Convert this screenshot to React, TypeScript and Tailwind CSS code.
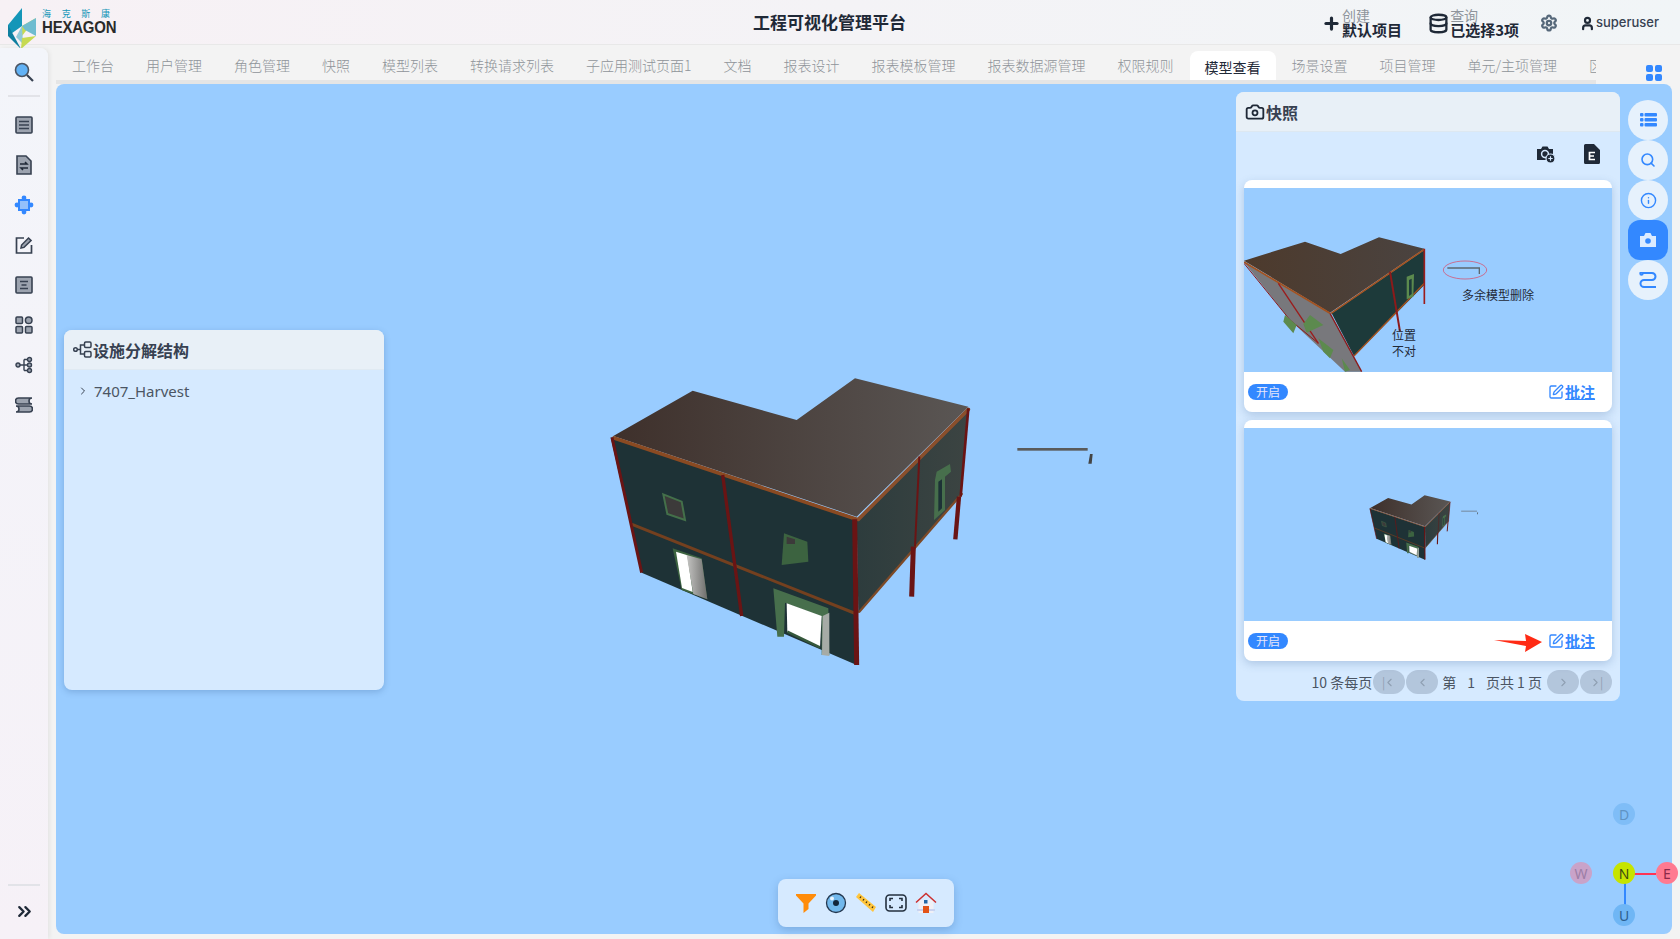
import { ChevronRight, ChevronLeft, ChevronsRight, Info, Search, Settings, SquarePen, Camera, User, Plus, Database } from "lucide-react";

const tabs = ["工作台", "用户管理", "角色管理", "快照", "模型列表", "转换请求列表", "子应用测试页面1", "文档", "报表设计", "报表模板管理", "报表数据源管理", "权限规则", "模型查看", "场景设置", "项目管理", "单元/主项管理", "区域管理"];

const cjk = { fontFamily: '"Noto Sans CJK SC", "Noto Sans", sans-serif' };

function Logo() {
  return (
    <div className="flex items-start pl-2 pt-2">
      <svg width="29" height="42" viewBox="0 0 29 42">
        <polygon points="0,17 14,0 14,18 0,28" fill="#1496b8" />
        <polygon points="0,17 13,41 0,28" fill="#0f7f9f" />
        <polygon points="14,18 28,10 14,28" fill="#c6da52" />
        <polygon points="14,18 28,10 28,28 17,22" fill="#6fbcd0" />
        <polygon points="8,29 14,18 15,36" fill="#8fc9d8" />
        <polygon points="13,41 14,30 28,28" fill="#c6da52" />
      </svg>
      <div className="ml-[5px] flex flex-col">
        <div className="flex w-[68px] justify-between text-[9px] leading-[12px] text-[#1496b8]" style={cjk}>
          <span>海</span><span>克</span><span>斯</span><span>康</span>
        </div>
        <div className="font-['Liberation_Sans'] text-[17px] leading-[16px] font-bold tracking-[-0.2px] text-[#2a2a2a] [transform:scaleX(0.88)] origin-left w-[78px]">HEXAGON</div>
      </div>
    </div>
  );
}

function Building({ className }: { className?: string }) {
  return (
    <svg viewBox="0 0 1560 960" className={className}>
      <defs>
        <linearGradient id="roofG" x1="0" x2="1"><stop offset="0" stopColor="#3e302b" /><stop offset="1" stopColor="#5a5654" /></linearGradient>
        <linearGradient id="wallR" x1="0" x2="1"><stop offset="0" stopColor="#2d3c3d" /><stop offset="1" stopColor="#3c4442" /></linearGradient>
        <linearGradient id="doorG" x1="0" x2="1"><stop offset="0" stopColor="#c4c4c2" /><stop offset="1" stopColor="#6e6e6c" /></linearGradient>
      </defs>
      <polygon points="62,232 800,480 800,915 155,638" fill="#1e3236" />
      <polygon points="800,480 1135,145 1115,400 805,760" fill="url(#wallR)" />
      <polygon points="70,228 308,92 620,180 795,55 1135,140 800,470" fill="url(#roofG)" />
      <g fill="none" strokeLinecap="round">
        <path d="M72,234 L800,478" stroke="#8a4a22" strokeWidth="11" />
        <path d="M805,478 L1135,148" stroke="#8a4f2c" strokeWidth="11" />
        <path d="M128,494 L800,762" stroke="#74401f" strokeWidth="9" />
        <path d="M808,755 L1115,402" stroke="#7d4a28" strokeWidth="7" />
      </g>
      <g fill="none" stroke="#6a1414">
        <path d="M66,232 L155,638" strokeWidth="9" />
        <path d="M398,345 L455,768" strokeWidth="10" />
        <path d="M794,478 L800,915" strokeWidth="15" />
        <path d="M988,290 L975,560" strokeWidth="6" />
        <path d="M970,560 L965,710" strokeWidth="15" />
        <path d="M1135,145 L1112,410" strokeWidth="8" />
        <path d="M1107,410 L1096,538" strokeWidth="13" />
      </g>
      <polygon points="220,403 275,425 285,480 232,462" fill="#3c3a3a" stroke="#44704a" strokeWidth="6" />
      <polygon points="582,520 652,545 655,605 575,615" fill="#3c6340" />
      <polygon points="590,530 615,538 615,552 590,552" fill="#3c3a3a" />
      <polygon points="248,565 335,595 352,718 275,690" fill="#3c6340" />
      <polygon points="258,575 292,586 308,696 276,684" fill="#ffffff" />
      <polygon points="290,585 335,598 352,718 310,702" fill="url(#doorG)" />
      <polygon points="550,685 715,745 718,885 695,885 695,770 585,728 582,830 562,830" fill="#476f4c" />
      <polygon points="590,730 695,768 690,862 592,815" fill="#ffffff" />
      <path d="M592,815 L690,862" stroke="#35583b" strokeWidth="7" />
      <polygon points="698,768 718,758 718,888 696,885" fill="#a6aba6" />
      <polygon points="1040,335 1080,312 1083,335 1065,350 1065,450 1032,480 1035,360" fill="#476f4c" />
      <polygon points="1045,365 1056,358 1056,445 1045,455" fill="#1d3236" />
      <rect x="1282" y="264" width="211" height="8" fill="#5a5a5a" />
      <polygon points="1500,282 1508,282 1505,311 1495,311" fill="#444" />
    </svg>
  );
}

function Shot1() {
  return (
    <svg viewBox="42 54 1104 552" className="absolute inset-0 h-full w-full">
      <defs>
        <linearGradient id="r1" x1="0" x2="1"><stop offset="0" stopColor="#4d3a2c" /><stop offset="1" stopColor="#4a4340" /></linearGradient>
      </defs>
      <polygon points="42,276 300,430 395,605 345,605 180,450" fill="#78787c" />
      <polygon points="305,430 583,240 583,345 372,558" fill="#1d3a3a" />
      <polygon points="42,272 225,215 332,252 447,202 583,236 300,428" fill="url(#r1)" />
      <g fill="none">
        <path d="M42,276 L300,430" stroke="#a4521f" strokeWidth="5" />
        <path d="M303,430 L583,238" stroke="#a4521f" strokeWidth="5" />
        <path d="M372,558 L583,340" stroke="#a4521f" strokeWidth="4" />
        <path d="M42,280 L180,450 L265,520" stroke="#8d1a1a" strokeWidth="3" />
        <path d="M145,340 L265,520" stroke="#9b1c1c" strokeWidth="4" />
        <path d="M300,430 L395,605" stroke="#8d1a1a" strokeWidth="4" />
        <path d="M480,305 L510,485" stroke="#8d1a1a" strokeWidth="6" />
        <path d="M583,236 L583,402" stroke="#9b1c1c" strokeWidth="5" />
      </g>
      <polygon points="165,435 200,465 190,490 160,455" fill="#5c8a4e" />
      <polygon points="240,435 280,465 230,488 220,462" fill="#5c8a4e" />
      <polygon points="265,505 310,540 300,565 280,545" fill="#5c8a4e" />
      <polygon points="335,565 360,600 345,605" fill="#5c8a4e" />
      <polygon points="530,320 552,312 550,380 530,388" fill="#5c8a4e" />
      <polygon points="537,330 545,326 545,372 537,378" fill="#1d3a3a" />
      <ellipse cx="705" cy="300" rx="65" ry="27" fill="none" stroke="#e0405a" strokeWidth="2" />
      <path d="M652,294 L748,294 L748,312" fill="none" stroke="#5c6770" strokeWidth="4" />
    </svg>
  );
}

function ShotCard({ h, children }: { h: string; children: React.ReactNode }) {
  return (
    <div className="relative flex flex-col overflow-hidden rounded-lg bg-white pt-2 shadow-[0_3px_8px_rgba(60,100,150,0.25)]">
      <div className={`relative bg-[#99ccff] ${h}`}>{children}</div>
      <div className="flex h-10 items-center justify-between pr-[17px] pl-1">
        <span className="flex h-4 w-10 items-center justify-center rounded-full bg-[#3388ff] text-[12px] text-[#e6e6fa]" style={cjk}>开启</span>
        <a className="flex items-center gap-px text-[15px] font-bold text-[#3388ff] underline" style={cjk}>
          <SquarePen size={16} strokeWidth={2} />批注
        </a>
      </div>
    </div>
  );
}

function PagerBtn({ children }: { children: React.ReactNode }) {
  return <span className="flex h-6 w-8 items-center justify-center rounded-full bg-[#b3c6dc] text-[#8f9fb2]">{children}</span>;
}

const sideIcons = [
  <svg width="18" height="18" viewBox="0 0 18 18" key="a"><rect x="1" y="1" width="16" height="16" rx="1" fill="#9ca3af" stroke="#374151" strokeWidth="1.6" /><path d="M4 5.5h10M4 9h10M4 12.5h10" stroke="#374151" strokeWidth="1.6" /></svg>,
  <svg width="16" height="20" viewBox="0 0 16 20" key="b"><path d="M1 1h9l5 5v13H1z" fill="#9ca3af" stroke="#374151" strokeWidth="1.6" /><path d="M4 9h7l-2-2M12 13H5l2 2" fill="none" stroke="#1f2937" strokeWidth="1.5" /></svg>,
  <svg width="20" height="20" viewBox="0 0 20 20" key="c"><rect x="5" y="5" width="10" height="10" fill="#93c0fb" stroke="#3388ff" strokeWidth="2" /><circle cx="10" cy="3" r="2.4" fill="#3388ff" /><circle cx="10" cy="17" r="2.4" fill="#3388ff" /><circle cx="3" cy="10" r="2.4" fill="#3388ff" /><circle cx="17" cy="10" r="2.4" fill="#3388ff" /></svg>,
  <svg width="18" height="18" viewBox="0 0 18 18" key="d"><path d="M9 2H1.5v15h15V9" fill="none" stroke="#374151" strokeWidth="1.7" /><path d="M6 12l.6-3L13.5 2l2.6 2.6L9 11.4z" fill="#9ca3af" stroke="#374151" strokeWidth="1.5" /></svg>,
  <svg width="18" height="18" viewBox="0 0 18 18" key="e"><rect x="1" y="1" width="16" height="16" rx="1" fill="#9ca3af" stroke="#374151" strokeWidth="1.6" /><path d="M5 5.5h8M6.5 9h5M5 12.5h8" stroke="#374151" strokeWidth="1.6" /></svg>,
  <svg width="18" height="18" viewBox="0 0 18 18" key="f"><rect x="1" y="1" width="6.5" height="6.5" rx="1" fill="#9ca3af" stroke="#374151" strokeWidth="1.5" /><circle cx="13.7" cy="4.2" r="3.3" fill="#9ca3af" stroke="#374151" strokeWidth="1.5" /><rect x="1" y="10.5" width="6.5" height="6.5" rx="1" fill="#9ca3af" stroke="#374151" strokeWidth="1.5" /><rect x="10.5" y="10.5" width="6.5" height="6.5" rx="1" fill="#9ca3af" stroke="#374151" strokeWidth="1.5" /></svg>,
  <svg width="18" height="18" viewBox="0 0 18 18" key="g"><circle cx="3" cy="9" r="2" fill="#9ca3af" stroke="#374151" strokeWidth="1.4" /><path d="M5 9h4M9 3.5v11M9 3.5h4M9 9h4M9 14.5h4" fill="none" stroke="#374151" strokeWidth="1.4" /><circle cx="14.5" cy="3.5" r="2" fill="#9ca3af" stroke="#374151" strokeWidth="1.4" /><circle cx="14.5" cy="9" r="2" fill="#9ca3af" stroke="#374151" strokeWidth="1.4" /><circle cx="14.5" cy="14.5" r="2" fill="#9ca3af" stroke="#374151" strokeWidth="1.4" /></svg>,
  <svg width="18" height="18" viewBox="0 0 18 18" key="h"><path d="M17 2H3.5a2.5 2.5 0 0 0 0 6H17a3 3 0 0 1 0-6z" fill="#9ca3af" stroke="#374151" strokeWidth="1.6" /><path d="M1 10h13.5a2.5 2.5 0 0 1 0 6H1a3 3 0 0 0 0-6z" fill="#9ca3af" stroke="#374151" strokeWidth="1.6" /></svg>,
];

export default function App() {
  return (
    <div className="flex h-screen w-full flex-col overflow-hidden bg-[#f3f3f3] font-['Noto_Sans_CJK_SC',sans-serif]" style={cjk}>
      <header className="flex h-[45px] shrink-0 items-start border-b border-[#e8e8e8] bg-gradient-to-r from-[#f7f1f5] to-[#f1f5f7]">
        <div className="flex-1"><Logo /></div>
        <h1 className="pt-[10px] text-[17px] leading-6 font-bold text-[#1f2937]">工程可视化管理平台</h1>
        <div className="flex flex-1 items-center justify-end pt-[8px] pr-[21px]">
          <Plus size={19} strokeWidth={4} className="text-[#1f2937]" />
          <div className="mr-[26px] ml-px flex flex-col text-[14px] leading-[14px]">
            <span className="text-[#8f959c]">创建</span>
            <span className="text-[15px] leading-[16px] font-bold text-[#1f2937]">默认项目</span>
          </div>
          <Database size={21} strokeWidth={2.6} className="mr-px text-[#1f2937]" />
          <div className="mr-[21px] flex flex-col text-[14px] leading-[14px]">
            <span className="text-[#8f959c]">查询</span>
            <span className="text-[15px] leading-[16px] font-bold text-[#1f2937]">已选择3项</span>
          </div>
          <Settings size={18} strokeWidth={3} className="mr-[22px] text-[#56687a]" />
          <User size={15} strokeWidth={3.5} className="text-[#1f2937]" />
          <span className="ml-px font-['Inter'] text-[13px] font-medium text-[#374151]">superuser</span>
        </div>
      </header>

      <div className="flex min-h-0 flex-1">
        <aside className="mt-[3px] flex w-12 shrink-0 flex-col items-center rounded-tr-lg bg-gradient-to-b from-[#f3f5fa] to-[#f6f1f7] pt-[4px] shadow-[2px_0_4px_rgba(0,0,0,0.06)]">
          <div className="flex h-10 w-10 items-center justify-center">
            <svg width="20" height="20" viewBox="0 0 20 20"><circle cx="8" cy="8" r="6.5" fill="#62b2f5" stroke="#4b5563" strokeWidth="1.6" /><path d="M13 13l6 6" stroke="#374151" strokeWidth="2.2" /></svg>
          </div>
          <div className="mt-[3px] mb-[8px] h-0.5 w-8 bg-[#e2e3e8]" />
          {sideIcons.map((icon, i) => (
            <div key={i} className="flex h-10 w-10 items-center justify-center">{icon}</div>
          ))}
          <div className="mt-auto mb-[5px] h-0.5 w-8 bg-[#e2e3e8]" />
          <div className="mb-[8px] flex h-10 w-10 items-center justify-center">
            <ChevronsRight size={21} strokeWidth={2.6} className="text-[#1f2937]" />
          </div>
        </aside>

        <main className="flex min-w-0 flex-1 flex-col pr-2 pb-[5px] pl-2">
          <div className="flex h-[39px] shrink-0 items-end">
            <div className="relative flex h-[39px] w-[1540px] shrink-0 items-end overflow-hidden border-b-4 border-[#e5e5e5]">
              {tabs.map((t) => (
                t === "模型查看" ? (
                  <span key={t} className="relative -mb-1 flex h-[33px] shrink-0 items-center rounded-t-lg bg-white px-[15px] text-[14px] text-[#1f2937]">{t}</span>
                ) : (
                  <span key={t} className="flex h-[29px] shrink-0 items-center px-4 text-[14px] font-light whitespace-nowrap text-[#8f9499]">{t}</span>
                )
              ))}
            </div>
            <div className="mb-[3px] ml-[50px] grid h-[16px] w-[16px] grid-cols-2 gap-[1.5px] self-end">
              <span className="rounded-[2px] bg-[#3388ff]" /><span className="rounded-[2px] bg-[#3388ff]" /><span className="rounded-[2px] bg-[#3388ff]" /><span className="rounded-[2px] bg-[#3388ff]" />
            </div>
          </div>

          <div className="relative min-h-0 flex-1 rounded-lg bg-[#99ccff]">
            <Building className="absolute top-[276px] left-[534px] h-[320px] w-[520px]" />

            <section className="absolute top-[246px] left-2 h-[360px] w-[320px] overflow-hidden rounded-lg bg-[#d6eaff] shadow-[0_2px_6px_rgba(40,80,130,0.25)]">
              <div className="flex h-10 items-center gap-px border-b border-[#e0eaf2] bg-[#e8f0f7] pl-[9px] text-[16px] font-bold text-[#374151]">
                <svg width="19" height="17" viewBox="0 0 19 17" fill="none" stroke="#374151" strokeWidth="1.5"><circle cx="2.5" cy="8.5" r="1.8" /><path d="M4.5 8.5h3M7.5 8.5V4h4M7.5 8.5V13h4" /><rect x="11.5" y="1" width="6.5" height="5.5" rx="1.2" /><rect x="11.5" y="10.5" width="6.5" height="5.5" rx="1.2" /></svg>
                设施分解结构
              </div>
              <div className="flex items-center gap-[5px] pt-[10px] pl-[13px] text-[15px] leading-[22px] text-[#4b5563]">
                <ChevronRight size={12} strokeWidth={2} className="text-[#374151]" />
                <span className="font-['Noto_Sans']">7407_Harvest</span>
              </div>
            </section>

            <section className="absolute top-2 left-[1180px] h-[609px] w-[384px] overflow-hidden rounded-lg bg-[#d6eaff]">
              <div className="flex h-10 items-center gap-px border-b border-[#dde8f1] bg-[#e8f0f7] pl-[9px] text-[16px] font-bold text-[#374151]">
                <Camera size={20} strokeWidth={2.2} className="text-[#1f2937]" />快照
              </div>
              <div className="flex h-10 items-center justify-end gap-[28px] pt-1 pr-[20px]">
                <svg width="20" height="20" viewBox="0 0 20 20"><path d="M1 5h4l1.5-2.5h5L13 5h4v11H1z" fill="#1f2937" /><circle cx="9" cy="10" r="3.4" fill="none" stroke="#d6eaff" strokeWidth="1.5" /><circle cx="14.5" cy="14.5" r="4.5" fill="#1f2937" stroke="#d6eaff" strokeWidth="1.2" /><path d="M12.3 14.5h4.4M14.5 12.3v4.4" stroke="#d6eaff" strokeWidth="1.2" /></svg>
                <svg width="16" height="20" viewBox="0 0 16 20"><path d="M1.5 0H10l6 6v12.5a1.5 1.5 0 0 1-1.5 1.5h-13A1.5 1.5 0 0 1 0 18.500V1.500A1.500 1.500 0 0 1 1.500 0z" fill="#1f2937" /><path d="M11 8.500H5.500v7H11M5.500 12H10" fill="none" stroke="#fff" strokeWidth="1.700" /></svg>
              </div>
              <div className="flex flex-col gap-2 px-2 pt-2">
                <ShotCard h="h-[184px]">
                  <Shot1 />
                  <span className="absolute top-[99px] left-[218px] text-[12px] leading-4 text-[#1f2937]">多余模型删除</span>
                  <span className="absolute top-[139px] left-[148px] w-6 text-[12px] leading-4 text-[#1f2937]">位置不对</span>
                </ShotCard>
                <ShotCard h="h-[193px]">
                  <Building className="absolute top-[63px] left-[121px] h-[72px] w-[117px]" />
                </ShotCard>
              </div>
              <div className="flex h-[33px] items-center justify-end pt-[9px] pr-2 text-[14px] text-[#4b5563]">
                <span className="mr-px">10 条每页</span>
                <div className="flex gap-px">
                  <PagerBtn><span className="mr-[-2px] text-[12px] leading-none">|</span><ChevronLeft size={13} /></PagerBtn>
                  <PagerBtn><ChevronLeft size={13} /></PagerBtn>
                </div>
                <span className="ml-[4px]">第</span>
                <span className="mx-[11px]">1</span>
                <span className="mr-[5px]">页共 1 页</span>
                <div className="flex gap-px">
                  <PagerBtn><ChevronRight size={13} /></PagerBtn>
                  <PagerBtn><ChevronRight size={13} /><span className="ml-[-2px] text-[12px] leading-none">|</span></PagerBtn>
                </div>
              </div>
              <svg width="48" height="18" viewBox="0 0 48 18" className="absolute top-[542px] left-[258px]">
                <polygon points="0,6 32,7 31,0 48,8 31,18 32,12" fill="#ff2a14" />
              </svg>
            </section>

            <div className="absolute top-4 left-[1572px] flex w-10 flex-col items-center">
              <span className="flex h-10 w-10 items-center justify-center rounded-full bg-[#e6f1fc]">
                <svg width="17" height="14" viewBox="0 0 17 14" fill="#3388ff"><rect x="0" y="0" width="3.500" height="3.600" rx="1" /><rect x="4.500" y="0" width="12.500" height="3.600" rx="1" /><rect x="0" y="5" width="3.500" height="3.600" rx="1" /><rect x="4.500" y="5" width="12.500" height="3.600" rx="1" /><rect x="0" y="10" width="3.500" height="3.600" rx="1" /><rect x="4.500" y="10" width="12.500" height="3.600" rx="1" /></svg>
              </span>
              <span className="flex h-10 w-10 items-center justify-center rounded-full bg-[#e6f1fc]"><Search size={16} strokeWidth={2.4} className="text-[#3388ff]" /></span>
              <span className="flex h-10 w-10 items-center justify-center rounded-full bg-[#e6f1fc]"><Info size={17} strokeWidth={2} className="text-[#3388ff]" /></span>
              <span className="flex h-10 w-10 items-center justify-center rounded-xl bg-[#3388ff]">
                <svg width="16" height="14" viewBox="0 0 16 14"><path d="M0 3h4l1.500-3h5L12 3h4v11H0z" fill="#dcebff" /><circle cx="8" cy="8" r="2.800" fill="#3388ff" /></svg>
              </span>
              <span className="flex h-10 w-10 items-center justify-center rounded-full bg-[#e6f1fc]">
                <svg width="18" height="16" viewBox="0 0 18 16" fill="none" stroke="#3388ff" strokeWidth="2"><path d="M4 1h9a3 3 0 0 1 0 7H5a3 3 0 0 0 0 7h12" /><circle cx="2.500" cy="1.500" r="1.200" /></svg>
              </span>
            </div>

            <div className="absolute bottom-[7px] left-[722px] flex h-12 w-[176px] items-center justify-center gap-[8px] rounded-lg bg-[#d6eaff] shadow-[0_3px_8px_rgba(40,80,130,0.25)]">
              <svg width="22" height="22" viewBox="0 0 22 22"><path d="M1 2h20v1.500l-7.500 8V17l-5 4v-9.500L1 3.500z" fill="#ff8c0a" /></svg>
              <svg width="22" height="22" viewBox="0 0 22 22"><circle cx="11" cy="11" r="9.500" fill="#71b8ec" stroke="#24384f" strokeWidth="1.300" /><circle cx="11" cy="11" r="3" fill="#12263a" /><circle cx="7" cy="6.500" r="2" fill="#e8f4fd" /></svg>
              <svg width="22" height="22" viewBox="0 0 22 22"><path d="M4 1l17 14-3 5L1 5z" fill="#ffc53d" /><path d="M6 4.500l-1 1.500M9 7l-1 1.500M12 9.500l-1 1.500M15 12l-1 1.500M18 14.500l-1 1.500" stroke="#3e2e10" strokeWidth="1.300" /></svg>
              <svg width="22" height="18" viewBox="0 0 22 18" fill="none" stroke="#24303f" strokeWidth="1.600"><rect x="1" y="1" width="20" height="16" rx="3.500" /><path d="M5 7V4.500h3M14 4.500h3V7M17 11v2.500h-3M8 13.500H5V11" /></svg>
              <svg width="22" height="22" viewBox="0 0 22 22"><rect x="3.500" y="8" width="15" height="13" fill="#f0f0f6" /><rect x="2" y="17" width="18" height="2" fill="#c9d3f0" /><path d="M1 10.500L11 1.500l10 9" fill="none" stroke="#cc2f2f" strokeWidth="1.500" /><rect x="9" y="8" width="3.500" height="3.500" fill="#2468a8" /><rect x="8" y="14" width="6" height="7" fill="#e25317" /></svg>
            </div>

            <div className="absolute right-[-6px] bottom-[8px] h-[107px] w-[107px] text-[14px]">
              <div className="absolute top-[11px] left-[11px] h-0 w-0" />
              <span className="absolute top-[54px] left-[53px] h-[1.500px] w-8 bg-[#ff3355]" />
              <span className="absolute top-[54px] left-[53px] h-8 w-[1.500px] bg-[#3388ff]" />
              <span className="absolute top-[-16px] left-[42px] flex h-[22px] w-[22px] items-center justify-center rounded-full bg-[#7fbdf7] font-['Noto_Sans'] text-[#5f93c4]">D</span>
              <span className="absolute top-[43px] left-[-1px] flex h-[22px] w-[22px] items-center justify-center rounded-full bg-[#c9a3c9] font-['Noto_Sans'] text-[#9c7ea6]">W</span>
              <span className="absolute top-[43px] left-[42px] flex h-[22px] w-[22px] items-center justify-center rounded-full bg-[#c6e400] font-['Noto_Sans'] text-[#3c4a10]">N</span>
              <span className="absolute top-[43px] left-[85px] flex h-[22px] w-[22px] items-center justify-center rounded-full bg-[#ff7a90] font-['Noto_Sans'] text-[#8a2a4a]">E</span>
              <span className="absolute top-[85px] left-[42px] flex h-[22px] w-[22px] items-center justify-center rounded-full bg-[#6fb6f5] font-['Noto_Sans'] text-[#2d5f8f]">U</span>
            </div>
          </div>
        </main>
      </div>
    </div>
  );
}
